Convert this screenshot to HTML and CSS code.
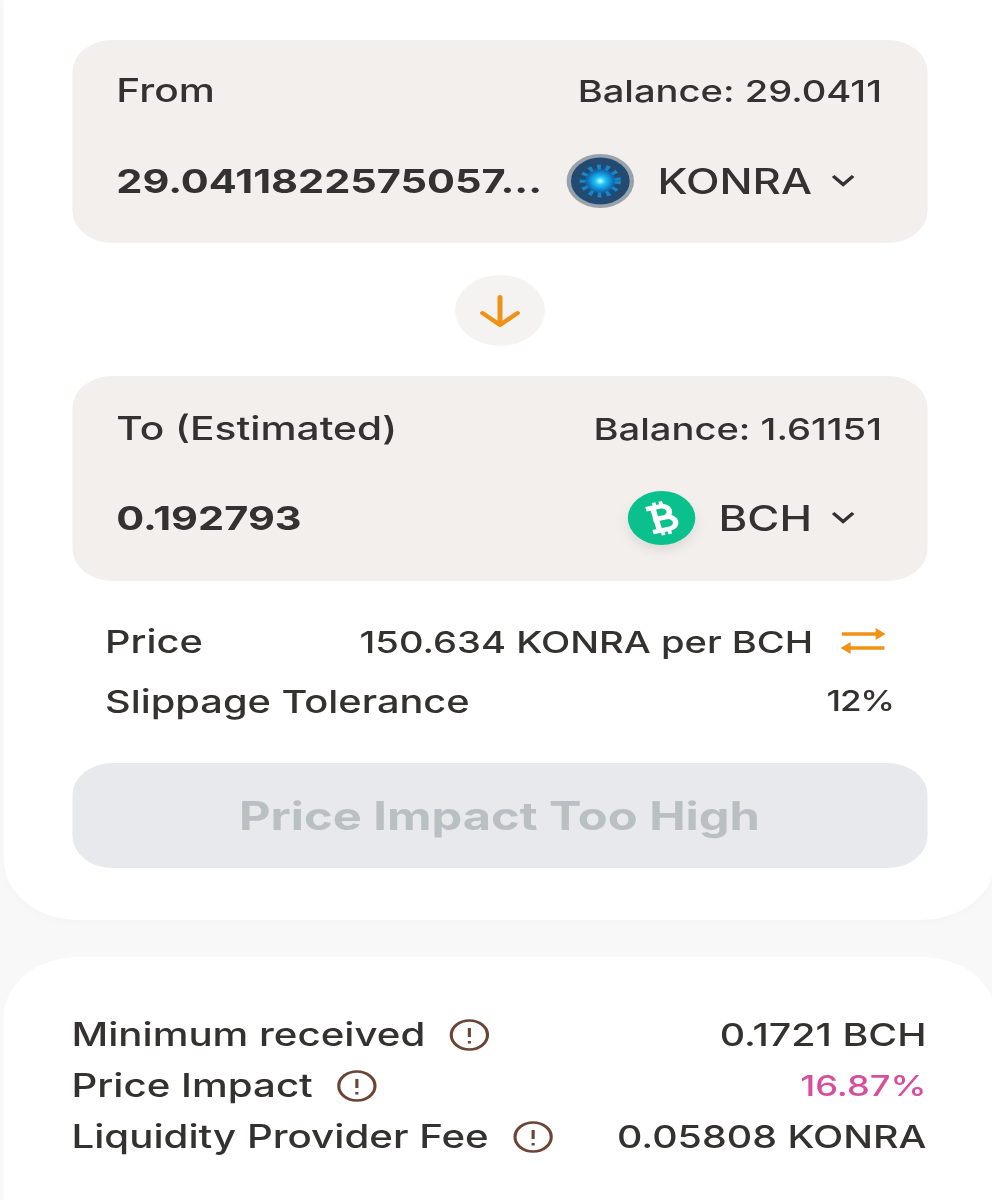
FILE: index.html
```html
<!DOCTYPE html>
<html lang="en">
<head>
    <meta charset="UTF-8">
    <meta name="viewport" content="width=device-width, initial-scale=1.0">
    <title>Swap</title>
    <link rel="stylesheet" href="styles.css">
</head>
<body>
    <div class="page">
        <div class="swap-card">
            <div class="panel">
                <div class="panel-row">
                    <span>From</span>
                    <span class="balance">Balance: 29.0411</span>
                </div>
                <div class="panel-row amount-row">
                    <span class="amount">29.0411822575057...</span>
                    <span class="token">
                        <svg class="token-icon" viewBox="0 0 54 54">
                            <defs>
                                <radialGradient id="konraGlow">
                                    <stop offset="0" stop-color="#d8fbff"/>
                                    <stop offset="0.3" stop-color="#20c8f5"/>
                                    <stop offset="0.7" stop-color="#0f7fcc"/>
                                    <stop offset="1" stop-color="#0f7fcc" stop-opacity="0"/>
                                </radialGradient>
                            </defs>
                            <circle cx="27" cy="27" r="27" fill="#9aa1a8"/>
                            <circle cx="27" cy="27" r="23.500" fill="#1a4d7c"/>
                            <circle cx="27" cy="27" r="18.500" fill="none" stroke="#27496b" stroke-width="8" stroke-dasharray="6.500 2.200"/>
                            <circle cx="27" cy="27" r="14" fill="none" stroke="#1a86c8" stroke-width="5" stroke-dasharray="3 4"/>
                            <circle cx="27" cy="27" r="13" fill="url(#konraGlow)"/>
                        </svg>
                        <span class="token-name">KONRA</span>
                        <svg class="chevron" viewBox="0 0 20 14"><path d="M2 2l8 8.500 8-8.500"/></svg>
                    </span>
                </div>
            </div>

            <div class="arrow-wrap">
                <div class="arrow-pill">
                    <svg class="arrow-icon" viewBox="0 0 34 34"><path d="M17 3v28M3 19l14 12 14-12"/></svg>
                </div>
            </div>

            <div class="panel panel-to">
                <div class="panel-row">
                    <span>To (Estimated)</span>
                    <span class="balance">Balance: 1.61151</span>
                </div>
                <div class="panel-row amount-row">
                    <span class="amount">0.192793</span>
                    <span class="token">
                        <svg class="token-icon bch-icon" viewBox="0 0 54 54">
                            <circle cx="27" cy="27" r="27" fill="#0ac18e"/>
                            <g transform="rotate(-14 27 27)" fill="none" stroke="#fff" stroke-width="4.500">
                                <path d="M20 15.500h9a5.500 5.500 0 0 1 0 11.500h-9M29 27h2a6 6 0 0 1 0 12H20M22.500 15.500v23.500M17 15.500h5M17 39h5"/>
                                <path d="M24.500 10.500v5M30 10.500v5M24.500 39v5M30 39v5" stroke-width="3"/>
                            </g>
                        </svg>
                        <span class="token-name">BCH</span>
                        <svg class="chevron" viewBox="0 0 20 14"><path d="M2 2l8 8.500 8-8.500"/></svg>
                    </span>
                </div>
            </div>

            <div class="info">
                <div class="info-row">
                    <span>Price</span>
                    <span class="price-value">150.634 KONRA per BCH
                        <svg class="switch-icon" viewBox="0 0 36 28">
                            <path d="M1 7h29M3 21h32"/>
                            <path class="switch-head" d="M28 1l8 6-8 6zM8 15l-8 6 8 6z"/>
                        </svg>
                    </span>
                </div>
                <div class="info-row">
                    <span>Slippage Tolerance</span>
                    <span class="percent">12%</span>
                </div>
            </div>

            <button class="swap-btn" disabled>Price Impact Too High</button>
        </div>

        <div class="details-card">
            <div class="detail-row">
                <span class="detail-label">Minimum received
                    <svg class="help-icon" viewBox="0 0 32 32"><circle cx="16" cy="16" r="14.500"/><path d="M16 9v9M16 22v2.500"/></svg>
                </span>
                <span>0.1721 BCH</span>
            </div>
            <div class="detail-row">
                <span class="detail-label">Price Impact
                    <svg class="help-icon" viewBox="0 0 32 32"><circle cx="16" cy="16" r="14.500"/><path d="M16 9v9M16 22v2.500"/></svg>
                </span>
                <span class="impact">16.87%</span>
            </div>
            <div class="detail-row">
                <span class="detail-label">Liquidity Provider Fee
                    <svg class="help-icon" viewBox="0 0 32 32"><circle cx="16" cy="16" r="14.500"/><path d="M16 9v9M16 22v2.500"/></svg>
                </span>
                <span>0.05808 KONRA</span>
            </div>
        </div>
    </div>
</body>
</html>
```

FILE: styles.css
```css
/* the whole page is a phone layout stretched sideways, so scale it once here */
html, body {
    margin: 0;
    height: 1200px;
    overflow: hidden;
    background: #f8f8f8;
}
.page {
    width: 793.6px;
    transform: scaleX(1.25);
    transform-origin: 0 0;
    font-family: Inter, "Liberation Sans", sans-serif;
    font-weight: 500;
    color: #333230;
}
.swap-card {
    margin-left: 3.2px;
    width: 684px;
    padding: 40px 54.4px 52px;
    background: #fff;
    border-radius: 0 0 60px 60px;
    box-shadow: 0 2px 8px rgba(0, 0, 0, 0.02);
}
.panel {
    height: 203px;
    box-sizing: border-box;
    padding: 30px 36px 0 35.5px;
    background: #f2efec;
    border-radius: 32px;
    font-size: 32.5px;
}
.panel-to {
    height: 205px;
    padding-top: 32px;
}
.balance {
    font-size: 30.5px;
}
.panel-row {
    display: flex;
    justify-content: space-between;
    align-items: center;
    height: 40px;
}
.amount-row {
    height: 54px;
    margin-top: 44px;
}
.panel-to .amount-row {
    margin-top: 43px;
}
.amount {
    white-space: nowrap;
    font-size: 33.2px;
    font-weight: 700;
}
.token {
    display: flex;
    align-items: center;
    flex-shrink: 0;
    margin-right: 21px;
    font-size: 35px;
}
.token-icon {
    width: 54.5px;
    height: 54px;
    margin-right: 18px;
}
.bch-icon {
    filter: drop-shadow(0 6px 5px rgba(0, 0, 0, 0.08));
}
.chevron {
    width: 21px;
    height: 14px;
    margin-left: 14px;
    fill: none;
    stroke: #333230;
    stroke-width: 3;
}
.arrow-wrap {
    display: flex;
    justify-content: center;
    padding: 32px 0 30px;
}
.arrow-pill {
    display: flex;
    align-items: center;
    justify-content: center;
    width: 72px;
    height: 71px;
    background: #f5f3f1;
    border-radius: 50%;
}
.arrow-icon {
    width: 34px;
    height: 34px;
    fill: none;
    stroke: #ef9318;
    stroke-width: 4;
    stroke-linecap: round;
    stroke-linejoin: round;
}
.info {
    padding: 30px 29px 0 26.5px;
    font-size: 31.8px;
}
.info-row {
    display: flex;
    justify-content: space-between;
    align-items: center;
    height: 60px;
}
.price-value {
    display: flex;
    align-items: center;
    gap: 21px;
    margin-right: 4px;
    font-size: 30.5px;
}
.percent {
    margin-right: -2.4px;
    font-size: 28px;
    letter-spacing: -1px;
}
.switch-icon {
    width: 37px;
    height: 28px;
    fill: none;
    stroke: #ef9318;
    stroke-width: 3.5;
}
.switch-head {
    fill: #ef9318;
    stroke: none;
}
.swap-btn {
    display: block;
    width: 100%;
    height: 105px;
    margin-top: 32px;
    border: 0;
    border-radius: 32px;
    background: #e8e9ec;
    color: #b9bfc3;
    font-family: inherit;
    font-size: 39px;
    font-weight: 700;
}
.details-card {
    margin: 37px 0 0 3.2px;
    width: 684px;
    padding: 52px 56px 60px 54px;
    background: #fff;
    border-radius: 60px 60px 0 0;
    font-size: 31.5px;
}
.detail-row {
    display: flex;
    justify-content: space-between;
    align-items: center;
    height: 51px;
}
.detail-label {
    display: flex;
    align-items: center;
    gap: 19px;
    font-size: 32.2px;
}
.help-icon {
    width: 33px;
    height: 32px;
    fill: none;
    stroke: #6b4433;
    stroke-width: 2.5;
}
.impact {
    color: #d64f9e;
    font-size: 29px;
}
```
